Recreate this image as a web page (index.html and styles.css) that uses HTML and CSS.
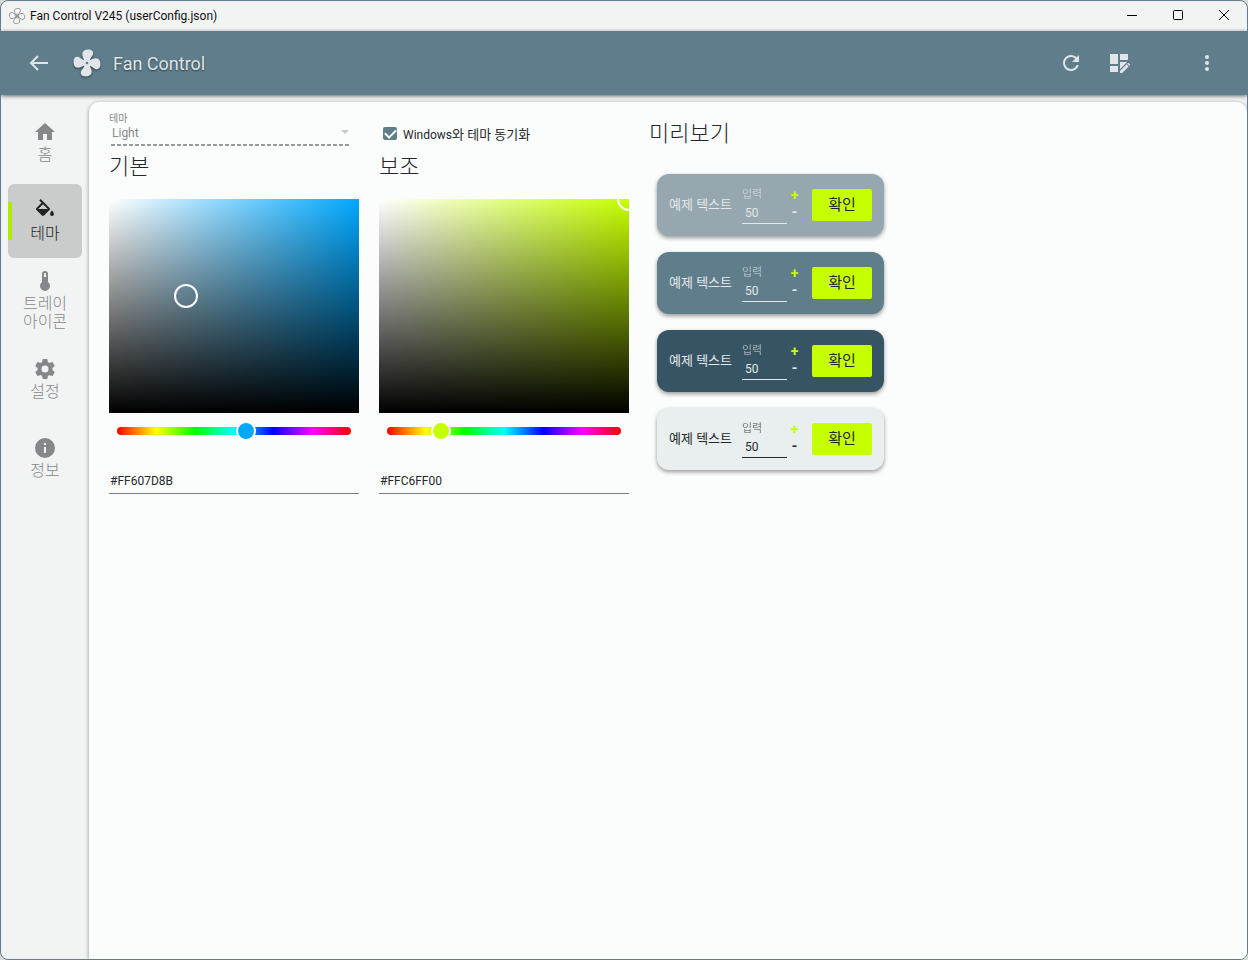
FILE: index.html
```html
<!DOCTYPE html>
<html lang="ko">
<head>
<meta charset="utf-8">
<meta name="viewport" content="width=device-width, initial-scale=1">
<title>Fan Control V245 (userConfig.json)</title>
<link rel="stylesheet" href="styles.css">
</head>
<body>
<svg class="defs" aria-hidden="true">
  <defs><path id="blade" d="M10 11.500C10.300 9.300 8.400 7.800 8.500 5.200C8.600 2.900 10.600 1.900 13 1.900C15.600 1.900 17 3.300 16.600 5.200C16.200 7 14.400 7.800 14 10.500Z"/></defs>
  <symbol id="fan" viewBox="0 0 24 24">
    <use href="#blade"/>
    <use href="#blade" transform="rotate(90 12 12)"/>
    <use href="#blade" transform="rotate(180 12 12)"/>
    <use href="#blade" transform="rotate(270 12 12)"/>
    <circle cx="12" cy="12" r="2.600"/>
    <circle class="hub" cx="12" cy="12" r="1"/>
  </symbol>
</svg>
<div class="window">
  <header class="titlebar">
    <svg class="titlebar-icon"><use href="#fan"/></svg>
    <span class="titlebar-text">Fan Control V245 (userConfig.json)</span>
    <div class="caption">
      <button class="caption-btn" aria-label="최소화"><svg viewBox="0 0 12 12"><path d="M1 5.500h10"/></svg></button>
      <button class="caption-btn" aria-label="최대화"><svg viewBox="0 0 12 12"><rect x="1.500" y="0.500" width="9" height="9" rx="1"/></svg></button>
      <button class="caption-btn" aria-label="닫기"><svg viewBox="0 0 12 12"><path d="M1 0l10 10M11 0L1 10"/></svg></button>
    </div>
  </header>
  <div class="appbar">
    <button class="icon-btn" aria-label="뒤로"><svg viewBox="0 0 24 24"><path class="line" d="M21 12H4M11 5l-7 7 7 7"/></svg></button>
    <svg class="logo"><use href="#fan"/></svg>
    <h1 class="brand">Fan Control</h1>
    <div class="actions">
      <button class="icon-btn" aria-label="새로 고침"><svg viewBox="0 0 24 24"><path d="M17.65,6.35C16.2,4.9 14.21,4 12,4A8,8 0 0,0 4,12A8,8 0 0,0 12,20C15.73,20 18.84,17.45 19.73,14H17.65C16.83,16.33 14.61,18 12,18A6,6 0 0,1 6,12A6,6 0 0,1 12,6C13.66,6 15.14,6.69 16.22,7.78L13,11H20V4L17.65,6.35Z"/></svg></button>
      <button class="icon-btn" aria-label="레이아웃 편집"><svg viewBox="0 0 24 24"><path d="M3 3h8v10H3zM13 3h8v6h-8zM3 15h8v6H3zM13 11h7.200L13 18.200zM13 22v-2.100l6.600-6.600 2.100 2.100L15.100 22zM22.900 14.200l-.6.600-2.100-2.100.6-.6a.6.6 0 0 1 .8 0l1.300 1.300a.6.6 0 0 1 0 .8z"/></svg></button>
      <button class="icon-btn icon-btn-more" aria-label="메뉴"><svg viewBox="0 0 24 24"><circle cx="12" cy="6" r="2"/><circle cx="12" cy="12" r="2"/><circle cx="12" cy="18" r="2"/></svg></button>
    </div>
  </div>
  <div class="body">
    <nav class="nav">
      <button class="nav-item"><svg viewBox="0 0 24 24"><path d="M10,20V14H14V20H19V12H22L12,3L2,12H5V20H10Z"/></svg><span>홈</span></button>
      <button class="nav-item nav-item-active" aria-current="page"><svg viewBox="0 0 24 24"><path d="M19,11.500C19,11.500 17,13.670 17,15A2,2 0 0,0 19,17A2,2 0 0,0 21,15C21,13.670 19,11.500 19,11.500M5.210,10L10,5.210L14.790,10M16.560,8.940L7.620,0L6.210,1.410L8.590,3.790L3.440,8.940C2.850,9.500 2.850,10.470 3.440,11.060L8.940,16.560C9.230,16.850 9.620,17 10,17C10.380,17 10.770,16.850 11.060,16.560L16.560,11.060C17.150,10.470 17.150,9.500 16.560,8.940Z"/></svg><span>테마</span></button>
      <button class="nav-item"><svg viewBox="0 0 24 24"><path d="M15 13V5a3 3 0 0 0-6 0v8a5 5 0 1 0 6 0M12 4a1 1 0 0 1 1 1v3h-2V5a1 1 0 0 1 1-1Z"/></svg><span>트레이<br>아이콘</span></button>
      <button class="nav-item"><svg viewBox="0 0 24 24"><path d="M12,15.500A3.500,3.500 0 0,1 8.500,12A3.500,3.500 0 0,1 12,8.500A3.500,3.500 0 0,1 15.500,12A3.500,3.500 0 0,1 12,15.500M19.430,12.970C19.470,12.650 19.500,12.330 19.500,12C19.500,11.670 19.470,11.340 19.430,11L21.540,9.370C21.730,9.220 21.780,8.950 21.660,8.730L19.660,5.270C19.540,5.050 19.270,4.960 19.050,5.050L16.560,6.050C16.040,5.660 15.500,5.320 14.870,5.070L14.500,2.420C14.460,2.180 14.250,2 14,2H10C9.750,2 9.540,2.180 9.500,2.420L9.130,5.070C8.500,5.320 7.960,5.660 7.440,6.050L4.950,5.050C4.730,4.960 4.460,5.050 4.340,5.270L2.340,8.730C2.210,8.950 2.270,9.220 2.460,9.370L4.570,11C4.530,11.340 4.500,11.670 4.500,12C4.500,12.330 4.530,12.650 4.570,12.970L2.460,14.630C2.270,14.780 2.210,15.050 2.340,15.270L4.340,18.730C4.460,18.950 4.730,19.030 4.950,18.950L7.440,17.940C7.960,18.340 8.500,18.680 9.130,18.930L9.500,21.580C9.540,21.820 9.750,22 10,22H14C14.250,22 14.460,21.820 14.500,21.580L14.870,18.930C15.500,18.670 16.040,18.340 16.560,17.940L19.050,18.950C19.270,19.030 19.540,18.950 19.660,18.730L21.660,15.270C21.780,15.050 21.730,14.780 21.540,14.630L19.430,12.970Z"/></svg><span>설정</span></button>
      <button class="nav-item"><svg viewBox="0 0 24 24"><path d="M13,9H11V7H13M13,17H11V11H13M12,2A10,10 0 0,0 2,12A10,10 0 0,0 12,22A10,10 0 0,0 22,12A10,10 0 0,0 12,2Z"/></svg><span>정보</span></button>
    </nav>
    <main class="content">
      <section class="column">
        <div class="option">
          <label class="option-label" for="theme">테마</label>
          <select class="theme-select" id="theme" disabled><option>Light</option></select>
          <svg class="theme-arrow" viewBox="0 0 8 4"><path d="M0 0h8L4 4z"/></svg>
        </div>
        <h2 class="heading">기본</h2>
        <div class="shade shade-blue"><span class="shade-handle shade-handle-blue"></span></div>
        <input class="hue hue-blue" type="range" min="0" max="360" value="201" aria-label="기본 색조">
        <input class="hex" type="text" value="#FF607D8B" aria-label="기본 색상">
      </section>
      <section class="column">
        <div class="option option-check">
          <input class="check" type="checkbox" id="sync" checked>
          <label class="check-label" for="sync"><span class="latin">Windows</span>와 테마 동기화</label>
        </div>
        <h2 class="heading">보조</h2>
        <div class="shade shade-lime"><span class="shade-handle shade-handle-lime"></span></div>
        <input class="hue hue-lime" type="range" min="0" max="360" value="74" aria-label="보조 색조">
        <input class="hex" type="text" value="#FFC6FF00" aria-label="보조 색상">
      </section>
      <section class="preview">
        <h2 class="heading">미리보기</h2>
        <div class="cards">
          <div class="card card-light">
            <span class="card-text">예제 텍스트</span>
            <div class="field"><label for="n1">입력</label><input id="n1" type="text" value="50"></div>
            <div class="stepper"><button class="plus">+</button><button>-</button></div>
            <button class="confirm">확인</button>
          </div>
          <div class="card card-mid">
            <span class="card-text">예제 텍스트</span>
            <div class="field"><label for="n2">입력</label><input id="n2" type="text" value="50"></div>
            <div class="stepper"><button class="plus">+</button><button>-</button></div>
            <button class="confirm">확인</button>
          </div>
          <div class="card card-dark">
            <span class="card-text">예제 텍스트</span>
            <div class="field"><label for="n3">입력</label><input id="n3" type="text" value="50"></div>
            <div class="stepper"><button class="plus">+</button><button>-</button></div>
            <button class="confirm">확인</button>
          </div>
          <div class="card card-paper">
            <span class="card-text">예제 텍스트</span>
            <div class="field"><label for="n4">입력</label><input id="n4" type="text" value="50"></div>
            <div class="stepper"><button class="plus">+</button><button>-</button></div>
            <button class="confirm">확인</button>
          </div>
        </div>
      </section>
    </main>
  </div>
</div>
</body>
</html>
```
FILE: styles.css
```css
* { box-sizing: border-box; }

body {
  margin: 0;
  background: #d5dbd9;
  color: #25282b;
  font-family: Roboto, "Noto Sans CJK KR", sans-serif;
  font-size: 12px;
}

button, input, select { font: inherit; color: inherit; }
button { padding: 0; border: 0; background: none; }

.defs { position: absolute; width: 0; height: 0; }

.window {
  display: flex;
  flex-direction: column;
  min-height: 100vh;
  border: 1px solid #607d8b;
  border-radius: 8px;
  background: #f2f3f3;
  overflow: hidden;
}

.titlebar {
  display: flex;
  align-items: center;
  height: 30px;
  padding-left: 7px;
}
.titlebar-icon {
  width: 18px;
  height: 18px;
  margin-right: 4px;
  fill: #f8f8f8;
  stroke: #777;
  stroke-width: 1;
}
.titlebar-text {
  color: #111;
  font-size: 12px;
}
.caption { display: flex; margin-left: auto; }
.caption-btn {
  display: grid;
  place-items: center;
  width: 46px;
  height: 30px;
}
.caption-btn svg {
  width: 12px;
  height: 12px;
  fill: none;
  stroke: #000;
}

.appbar {
  display: flex;
  align-items: center;
  height: 64px;
  padding: 0 16px;
  background: #607d8b;
  color: #dfe5e8;
  box-shadow: 0 1px 4px rgba(0, 0, 0, .6);
  z-index: 1;
}
.icon-btn {
  display: grid;
  place-items: center;
  width: 44px;
  height: 48px;
}
.icon-btn svg { width: 24px; height: 24px; fill: currentColor; }
.icon-btn .line { fill: none; stroke: currentColor; stroke-width: 2; }
.logo {
  width: 32px;
  height: 32px;
  margin-left: 10px;
  fill: currentColor;
  filter: drop-shadow(0 1px 1px rgba(0, 0, 0, .5));
}
.hub { fill: #607d8b; }
.brand {
  margin: 0 0 0 10px;
  font-size: 18px;
  font-weight: 400;
  text-shadow: 0 1px 2px rgba(0, 0, 0, .5);
}
.actions { display: flex; gap: 4px; margin-left: auto; }
.icon-btn-more { margin-left: 40px; margin-right: 2px; }

.body { display: flex; flex: 1; }

.nav {
  display: flex;
  flex-direction: column;
  gap: 5px;
  width: 88px;
  padding: 10px 7px;
}
.nav-item {
  display: flex;
  flex-direction: column;
  align-items: center;
  justify-content: center;
  gap: 2px;
  width: 74px;
  height: 74px;
  border-radius: 6px;
  color: #85888a;
  font-size: 16px;
  font-weight: 300;
  line-height: 18px;
}
.nav-item svg {
  flex: none;
  width: 24px;
  height: 24px;
  fill: currentColor;
}
.nav-item-active {
  background: linear-gradient(#aeea00, #aeea00) left center / 4px 38px no-repeat, #cacccb;
  color: #202326;
}

.content {
  display: flex;
  align-items: flex-start;
  gap: 20px;
  flex: 1;
  margin-top: 7px;
  padding: 9px 20px;
  border-radius: 10px 10px 0 0;
  background: #fbfdfc;
  box-shadow: 0 1px 4px rgba(0, 0, 0, .4);
}
.column {
  display: flex;
  flex-direction: column;
  width: 250px;
}
.option {
  position: relative;
  display: flex;
  flex-direction: column;
  height: 38px;
}
.option-label {
  color: #85888a;
  font-size: 10px;
  line-height: 16px;
}
.theme-select {
  appearance: none;
  width: 239px;
  height: 19px;
  margin-left: 2px;
  padding: 0 1px 6px;
  border: 0;
  background: repeating-linear-gradient(90deg, #999 0 4px, transparent 4px 6px) left bottom / 100% 2px no-repeat;
  color: #85888a;
  line-height: 13px;
  opacity: 1;
}
.theme-arrow {
  position: absolute;
  top: 19px;
  right: 10px;
  width: 8px;
  height: 4px;
  fill: #c8caca;
}
.option-check {
  flex-direction: row;
  align-items: center;
  gap: 6px;
  padding: 7px 0 0 4px;
}
.check-label { font-size: 13px; }
.latin { font-size: 12px; }
.check {
  appearance: none;
  width: 14px;
  height: 13px;
  margin: 0;
  border-radius: 2px;
  background: #607d8b;
  display: grid;
  place-items: center;
}
.check:checked::before {
  content: "";
  width: 9px;
  height: 5px;
  margin-top: -2px;
  border: solid #fff;
  border-width: 0 0 2px 2px;
  transform: rotate(-45deg);
}
.heading {
  margin: 0;
  font-size: 22px;
  font-weight: 300;
  line-height: 36px;
}
.shade {
  position: relative;
  height: 214px;
  margin-top: 14px;
  overflow: hidden;
}
.shade-blue { background: linear-gradient(transparent, #000), linear-gradient(90deg, #fff, #00a8ff); }
.shade-lime { background: linear-gradient(transparent, #000), linear-gradient(90deg, #fff, #c6ff00); }
.shade-handle {
  position: absolute;
  width: 24px;
  height: 24px;
  border: 2px solid #fff;
  border-radius: 50%;
}
.shade-handle-blue { left: 65px; top: 85px; }
.shade-handle-lime { right: -12px; top: -12px; }

.hue {
  appearance: none;
  height: 8px;
  margin: 14px 8px 0;
  border-radius: 4px;
  background: linear-gradient(90deg, #f00, #ff0, #0f0, #0ff, #00f, #f0f, #f00);
}
.hue::-webkit-slider-thumb {
  appearance: none;
  width: 20px;
  height: 20px;
  border: 2px solid #fff;
  border-radius: 50%;
}
.hue-blue::-webkit-slider-thumb { background: #00a8ff; }
.hue-lime::-webkit-slider-thumb { background: #c6ff00; }

.hex {
  height: 27px;
  margin-top: 32px;
  padding: 2px 1px 0;
  border: 0;
  border-bottom: 1px solid #7b7d7e;
  background: none;
}

.preview { padding-top: 5px; }
.cards {
  display: flex;
  flex-direction: column;
  gap: 16px;
  margin: 22px 8px;
}
.card {
  display: flex;
  align-items: center;
  height: 62px;
  padding: 0 12px;
  border-radius: 12px;
  color: #e3e8ea;
  box-shadow: 0 2px 4px rgba(0, 0, 0, .4);
}
.card-light { background: #96a7b0; }
.card-mid { background: #607d8b; }
.card-dark { background: #365463; }
.card-paper { background: #e9eeee; color: #25282b; }
.card-text { width: 73px; padding-bottom: 4px; font-size: 13px; white-space: nowrap; }
.field { display: flex; flex-direction: column; width: 45px; }
.field label { font-size: 11px; line-height: 16px; opacity: .6; }
.field input {
  width: 100%;
  height: 21px;
  padding: 1px 3px 0;
  border: 0;
  border-bottom: 1px solid currentColor;
  background: none;
}
.stepper { display: flex; flex-direction: column; padding-bottom: 2px; }
.stepper button {
  width: 15px;
  height: 17px;
  font-size: 14px;
  font-weight: 700;
  line-height: 17px;
}
.stepper .plus { color: #c6ff00; }
.confirm {
  width: 60px;
  height: 32px;
  margin-left: 10px;
  padding-bottom: 3px;
  border-radius: 2px;
  background: #c6ff00;
  color: #25282b;
  font-size: 15px;
}
```
